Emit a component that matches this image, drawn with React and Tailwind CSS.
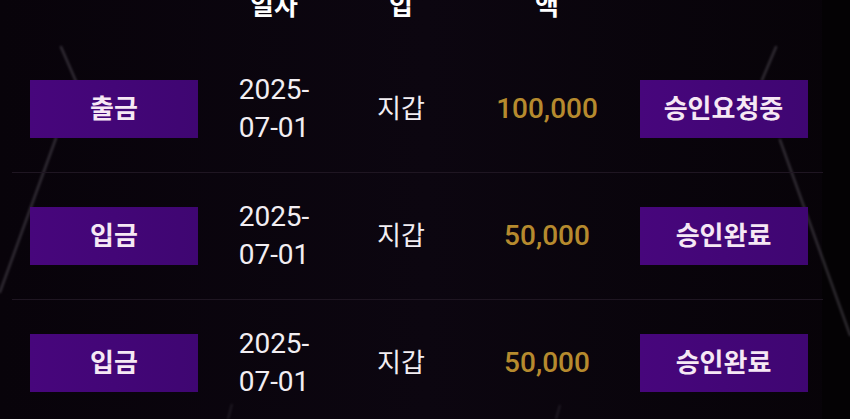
import React from 'react';

const rows = [
  { type: '출금', date: ['2025-', '07-01'], wallet: '지갑', amount: '100,000', status: '승인요청중' },
  { type: '입금', date: ['2025-', '07-01'], wallet: '지갑', amount: '50,000', status: '승인완료' },
  { type: '입금', date: ['2025-', '07-01'], wallet: '지갑', amount: '50,000', status: '승인완료' },
];

function Beams() {
  return (
    <svg className="pointer-events-none absolute inset-0" width="850" height="419" viewBox="0 0 850 419">
      <defs>
        <filter id="soft" x="-20%" y="-20%" width="140%" height="140%">
          <feGaussianBlur stdDeviation="0.9" />
        </filter>
      </defs>
      <g stroke="#9a94a0" strokeWidth="2.5" strokeLinecap="round" opacity="0.28" filter="url(#soft)">
        <line x1="61" y1="47" x2="78" y2="86" />
        <line x1="56" y1="138" x2="0" y2="292" />
        <line x1="776" y1="47" x2="762" y2="80" />
        <line x1="780" y1="140" x2="850" y2="335" />
      </g>
      <g stroke="#9a94a0" strokeWidth="2" opacity="0.15" filter="url(#soft)">
        <line x1="228" y1="419" x2="232" y2="404" />
        <line x1="556" y1="419" x2="560" y2="405" />
      </g>
    </svg>
  );
}

function Badge({ children }) {
  return (
    <div className="flex h-[58px] w-[168px] items-center justify-center bg-gradient-to-r from-[#47067c] to-[#3f0672] text-[26px] font-bold text-[#f6e8f4]">
      {children}
    </div>
  );
}

export default function App() {
  return (
    <div
      className="relative h-[419px] w-[850px] overflow-hidden bg-gradient-to-r from-[#08030a] via-[#0c0610] to-[#070308]"
      style={{ fontFamily: 'Roboto, "Noto Sans CJK KR", sans-serif' }}
    >
      <div className="absolute right-0 top-0 h-full w-[28px] bg-[#040204]" />
      <Beams />

      <div className="relative ml-[12px] w-[811px]">
        {/* header row, scrolled partly off the top */}
        <div className="grid h-[46px] grid-cols-[204px_116px_138px_154px_199px] text-[26px] font-bold leading-[30px] text-white">
          <div />
          <div className="-mt-[9px] text-center">일자</div>
          <div className="-mt-[9px] text-center">입</div>
          <div className="-mt-[9px] text-center">액</div>
          <div />
        </div>

        {rows.map((r, i) => (
          <div
            key={i}
            className="grid h-[127px] grid-cols-[204px_116px_138px_154px_199px] items-center border-b border-[#1f1622]"
          >
            <div className="flex justify-center">
              <Badge>{r.type}</Badge>
            </div>
            <div className="text-center text-[28px] leading-[38px] text-[#f2eef2]">
              {r.date[0]}
              <br />
              {r.date[1]}
            </div>
            <div className="text-center text-[26px] text-[#f2eef2]">{r.wallet}</div>
            <div className="text-center text-[28px] font-medium text-[#b68a2e]">{r.amount}</div>
            <div className="flex justify-center">
              <Badge>{r.status}</Badge>
            </div>
          </div>
        ))}
      </div>
    </div>
  );
}
